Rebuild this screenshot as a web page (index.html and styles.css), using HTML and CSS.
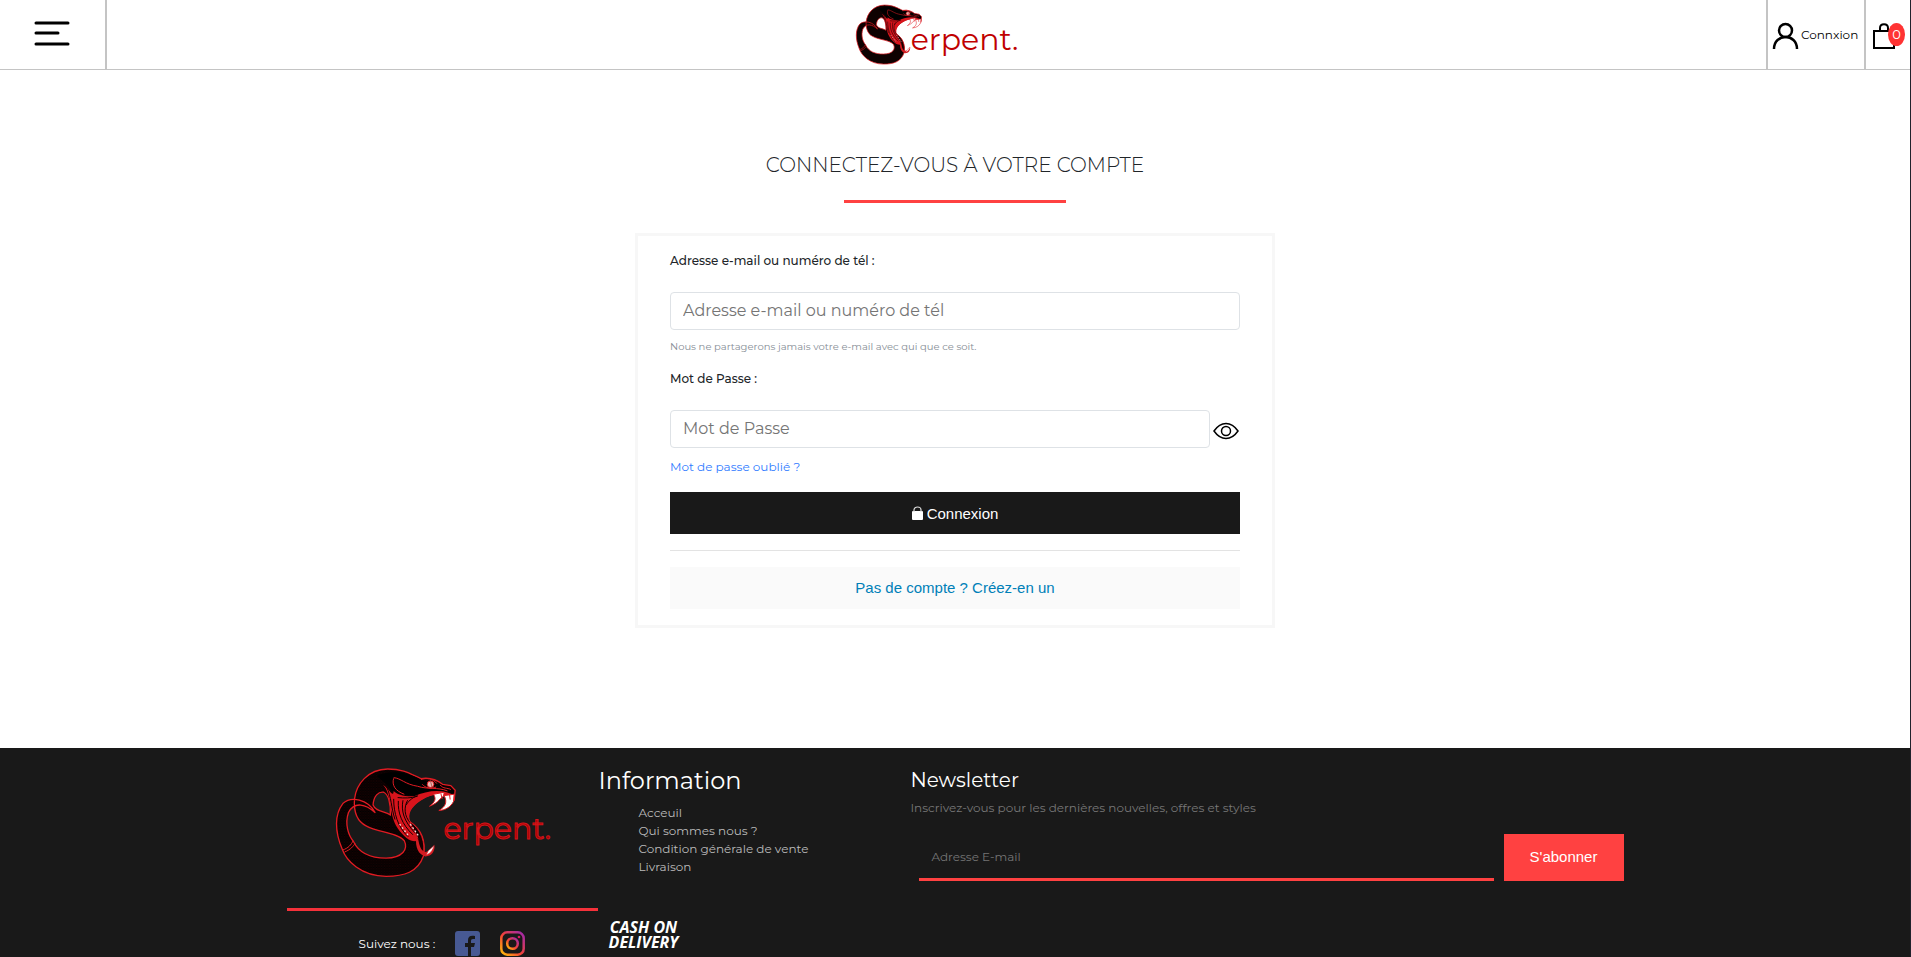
FILE: index.html
```html
<!DOCTYPE html>
<html lang="fr">
<head>
<meta charset="utf-8">
<meta name="viewport" content="width=device-width, initial-scale=1">
<title>Serpent. – Connexion</title>
<link rel="stylesheet" href="styles.css">
</head>
<body>
<svg class="sprite" aria-hidden="true">
  <defs>
    <pattern id="scales" width="8" height="8" patternUnits="userSpaceOnUse">
      <rect width="8" height="8" fill="#000"/>
      <path d="M0 4L4 0L8 4L4 8Z" fill="#000" stroke="#3a0406" stroke-width="1"/>
    </pattern>
    <linearGradient id="insta" x1="0" y1="1" x2="1" y2="0">
      <stop offset="0" stop-color="#ffc107"/><stop offset=".45" stop-color="#f44336"/><stop offset="1" stop-color="#9c27b0"/>
    </linearGradient>
    <symbol id="snake" viewBox="190 78 370 334">
      <path d="M250 175C255 130 290 85 350 84C400 84 420 100 450 113C480 108 500 118 515 130L540 134L553 148L550 178C530 155 490 150 450 176C420 195 405 220 417 243C450 265 465 300 458 345C440 395 400 407 345 407C270 407 225 360 213 325C190 270 190 220 215 188C240 165 290 175 312 215C285 190 250 180 232 215C220 250 232 285 247 302C265 340 300 352 345 352C395 352 412 325 400 300C380 275 320 275 285 255C255 240 248 205 250 175Z" fill="url(#scales)" stroke="#e01b22" stroke-width="4" stroke-linejoin="round"/>
      <path d="M306 192C308 164 322 152 338 154C352 160 360 190 358 222C340 210 315 214 306 192Z" fill="currentColor" stroke="#e01b22" stroke-width="4"/>
      <path d="M318 105C350 86 410 92 450 116L515 132L550 148L548 158C500 145 460 150 430 165C400 158 375 160 362 150C350 130 335 122 318 105Z" fill="#000"/>
      <path d="M336 132C362 156 352 220 380 262C400 292 424 306 440 300C442 282 420 262 414 238C408 214 424 192 456 174C492 154 526 156 550 178L552 166C520 142 470 148 430 166C400 168 376 160 368 150C366 172 358 146 336 132Z" fill="#d8141c"/>
      <path d="M368 174C368 215 380 260 412 288M382 180C380 215 392 250 426 282M396 178C390 210 398 240 432 276M410 178C398 200 400 226 418 246M346 136C362 170 360 200 372 236M440 164C420 172 412 182 406 192M380 170C400 172 420 172 440 166" fill="none" stroke="#120000" stroke-width="3"/>
      <path d="M368 110C390 112 402 130 440 136C470 146 500 138 530 150M368 112C362 132 372 150 400 160M450 116C466 110 486 112 498 128M454 130C462 140 480 146 496 138M508 132C516 144 530 140 540 146" fill="none" stroke="#e01b22" stroke-width="3"/>
      <path d="M417 243C450 262 466 310 456 342C446 334 440 316 440 300C444 284 422 262 417 243Z" fill="#160000" stroke="#e01b22" stroke-width="3"/>
      <path d="M436 292C432 316 442 344 464 347C482 347 492 332 491 316C484 328 474 334 462 334C450 330 446 316 442 298Z" fill="#d21c22"/>
      <path d="M466 342C476 340 486 330 490 314L472 330Z" fill="#fff" stroke="#e01b22" stroke-width="2"/>
      <circle cx="479" cy="130" r="10" fill="#eab6b0" stroke="#e01b22" stroke-width="3"/>
      <path d="M478 118L484 140" stroke="#a03030" stroke-width="2"/>
      <path d="M488 160L520 154L518 166C508 170 506 184 476 196C494 182 496 174 488 160ZM520 164L550 160L548 182C540 198 524 208 504 209C524 198 530 184 520 164Z" fill="#fff" stroke="#e01b22" stroke-width="3"/>
      <path d="M510 158L514 174M536 160L538 176" stroke="#e01b22" stroke-width="3"/>
      <path d="M386 250L412 284M418 250L442 284" fill="none" stroke="#f2dcdc" stroke-width="4" stroke-dasharray="5 7"/>
      <path d="M214 328C232 322 240 312 246 300M220 334C240 326 246 316 252 308" fill="none" stroke="#e01b22" stroke-width="3"/>
    </symbol>
  </defs>
</svg>

<header class="topbar">
  <button class="menu" type="button" aria-label="Menu">
    <svg width="36" height="26" viewBox="0 0 36 26" fill="none" stroke="#000" stroke-width="3" stroke-linecap="round"><path d="M2 2H34M2 12H24M2 23H34"/></svg>
  </button>
  <a class="brand" href="#" aria-label="Serpent.">
    <svg class="brand-snake" viewBox="190 78 370 334"><use href="#snake" x="190" y="78" width="370" height="334"/></svg>
    <span class="brand-name">erpent.</span>
  </a>
  <nav class="account" aria-label="Compte">
    <a class="user" href="#">
      <svg width="27" height="27" viewBox="0 0 27 27" fill="none" stroke="#000" stroke-width="2.500"><circle cx="13.500" cy="8.500" r="6.500"/><path d="M2 27C2 11 25 11 25 27"/></svg>
      <span>Connxion</span>
    </a>
    <a class="cart" href="#" aria-label="Panier">
      <svg width="22" height="26" viewBox="0 0 22 26" fill="none" stroke="#000" stroke-width="2"><path d="M1 8H21V25H1Z"/><path d="M7 8V5C7 0 15 0 15 5V8"/></svg>
      <span class="count">0</span>
    </a>
  </nav>
</header>

<main class="login">
  <h1>CONNECTEZ-VOUS À VOTRE COMPTE</h1>
  <form class="card">
    <label for="email">Adresse e-mail ou numéro de tél :</label>
    <input class="field" id="email" type="text" placeholder="Adresse e-mail ou numéro de tél">
    <small>Nous ne partagerons jamais votre e-mail avec qui que ce soit.</small>
    <label for="password">Mot de Passe :</label>
    <div class="password">
      <input class="field" id="password" type="password" placeholder="Mot de Passe">
      <button class="eye" type="button" aria-label="Afficher le mot de passe">
        <svg width="26" height="18" viewBox="0 0 26 18" fill="none" stroke="#000" stroke-width="1.500"><path d="M1 9C8-1 18-1 25 9C18 19 8 19 1 9Z"/><circle cx="13" cy="9" r="4.500"/></svg>
      </button>
    </div>
    <a class="forgot" href="#">Mot de passe oublié ?</a>
    <button class="submit" type="submit">
      <svg width="11" height="14" viewBox="0 0 11 14"><rect x="0" y="5" width="11" height="9" rx="1" fill="#fff"/><path d="M2 6V4C2 0 9 0 9 4V6" fill="none" stroke="#ddd" stroke-width="1.200"/></svg>
      <span>Connexion</span>
    </button>
    <hr>
    <a class="signup" href="#">Pas de compte ? Créez-en un</a>
  </form>
</main>

<footer class="footer">
  <section class="about">
    <a class="footer-brand" href="#" aria-label="Serpent.">
      <svg class="footer-snake" viewBox="190 78 370 334"><use href="#snake" x="190" y="78" width="370" height="334"/></svg>
      <span class="footer-name">erpent.</span>
    </a>
    <div class="social">
      <span>Suivez nous :</span>
      <a href="#" aria-label="Facebook"><svg width="25" height="25" viewBox="0 0 25 25"><rect width="25" height="25" rx="3" fill="#475993"/><path d="M13 25V16H10V12H13V9C13 5 16 4 20 5V8C17 8 16 8 16 10V12H20L19 16H16V25Z" fill="#191919"/></svg></a>
      <a href="#" aria-label="Instagram"><svg width="25" height="25" viewBox="0 0 25 25" fill="none" stroke="url(#insta)" stroke-width="2.500"><rect x="1.300" y="1.300" width="22.400" height="22.400" rx="6"/><circle cx="12.500" cy="12.500" r="5.300"/><circle cx="19" cy="6" r="1.300" fill="#d81b60" stroke="none"/></svg></a>
    </div>
  </section>
  <section class="info">
    <h2>Information</h2>
    <ul>
      <li><a href="#">Acceuil</a></li>
      <li><a href="#">Qui sommes nous ?</a></li>
      <li><a href="#">Condition générale de vente</a></li>
      <li><a href="#">Livraison</a></li>
    </ul>
    <p class="cod">CASH ON<br>DELIVERY</p>
  </section>
  <section class="news">
    <h2>Newsletter</h2>
    <p>Inscrivez-vous pour les dernières nouvelles, offres et styles</p>
    <form class="subscribe">
      <input type="email" aria-label="Adresse E-mail" placeholder="Adresse E-mail">
      <button type="submit">S'abonner</button>
    </form>
  </section>
</footer>
</body>
</html>
```
FILE: styles.css
```css
* { box-sizing: border-box; }

body {
  margin: 0;
  min-height: 100vh;
  display: flex;
  flex-direction: column;
  border-right: 1px solid #20212b;
  background: #fff;
  color: #212529;
  font-family: Montserrat, Inter, sans-serif;
  font-size: 12px;
}

a { text-decoration: none; color: inherit; }
button { border: 0; padding: 0; background: none; cursor: pointer; font: 15px "Liberation Sans", Arial, sans-serif; }
svg { display: block; flex: none; }
h1, h2, p, ul { margin: 0; padding: 0; font-weight: 400; }
.sprite { position: absolute; width: 0; height: 0; }

/* Top bar */
.topbar {
  display: flex;
  justify-content: space-between;
  height: 70px;
  border-bottom: 1px solid #c4c4c4;
}
.menu {
  width: 107px;
  padding: 0 0 2px 34px;
  border-right: 2px solid #c4c4c4;
}
.brand { display: flex; align-items: center; color: #fff; }
.brand-snake { width: 68px; height: 61px; }
.brand-name { margin: 10px 0 0 -12px; font-size: 30px; color: #c00000; }
.account { display: flex; justify-content: flex-end; }
.account a { display: flex; align-items: center; border-left: 2px solid #c4c4c4; color: #000; }
.user { width: 98px; gap: 2px; padding: 2px 0 0 4px; font-size: 12px; }
.user span { padding-bottom: 2px; }
.cart { position: relative; width: 46px; padding: 2px 0 0 7px; }
.count {
  position: absolute;
  left: 22px;
  top: 23px;
  width: 17px;
  height: 23px;
  border-radius: 50%;
  background: #ff3333;
  color: #fff;
  font-size: 13px;
  line-height: 23px;
  text-align: center;
}

/* Login */
.login { display: flex; flex-direction: column; align-items: center; padding: 80px 16px 120px; }
h1 { font-size: 20px; font-weight: 300; line-height: 30px; }
h1::after {
  content: "";
  display: block;
  width: 222px;
  height: 3px;
  margin: 20px auto 30px;
  background: #ff4141;
}
.card {
  display: flex;
  flex-direction: column;
  width: 100%;
  max-width: 640px;
  padding: 16px 32px;
  border: 3px solid #f7f7f7;
}
label { height: 40px; line-height: 18px; font-size: 12px; font-weight: 500; }
.field {
  width: 100%;
  height: 38px;
  padding: 0 12px 2px;
  border: 1px solid #dee2e6;
  border-radius: 4px;
  background: #fff;
  font: 16px Montserrat, Inter, sans-serif;
}
.field::placeholder { color: #757575; opacity: 1; }
small { margin: 8px 0 14px; font-size: 10px; line-height: 18px; color: #868e96; }
.password { display: flex; align-items: center; gap: 3px; }
.eye { width: 27px; padding-top: 4px; flex: none; }
.forgot { align-self: flex-start; margin: 10px 0 16px; line-height: 18px; color: #2f7bff; }
.submit {
  display: flex;
  justify-content: center;
  align-items: center;
  gap: 4px;
  height: 42px;
  background: #191919;
  color: #fff;
}
hr { width: 100%; margin: 16px 0; border: 0; border-top: 1px solid #e3e3e3; }
.signup {
  background: #fafafa;
  color: #0080b8;
  font: 15px/42px "Liberation Sans", Arial, sans-serif;
  text-align: center;
}

/* Footer */
.footer {
  flex: 1;
  display: grid;
  grid-template-columns: 7fr 7fr 16fr;
  padding: 0 15%;
  background: #191919;
  color: #fff;
}
.footer-brand {
  display: flex;
  align-items: center;
  height: 163px;
  padding: 0 0 12px 47px;
  border-bottom: 3px solid #f5313a;
  color: #191919;
}
.footer-snake { width: 124px; height: 111px; }
.footer-name { margin: 12px 0 0 -14px; font-size: 30px; color: #a00000; -webkit-text-stroke: 1px #d4141a; }
.social { display: flex; align-items: center; gap: 20px; padding: 20px 0 0 72px; }
.info { padding-top: 18px; }
.info h2 { font-size: 24px; line-height: 30px; }
.info ul { list-style: none; margin-top: 8px; padding-left: 40px; line-height: 18px; color: #bbb; }
.cod { width: 90px; margin-top: 44px; font: italic 700 16px/15px "Open Sans", "Noto Sans", sans-serif; text-align: center; }
.news { padding-top: 18px; }
.news h2 { font-size: 20px; line-height: 28px; }
.news p { margin-top: 5px; line-height: 18px; color: #777; }
.subscribe { display: flex; gap: 10px; margin: 17px 0 0 9px; }
.subscribe input {
  flex: 1;
  min-width: 0;
  padding: 0 12px;
  border: 0;
  border-bottom: 3px solid #ff4141;
  background: transparent;
  color: #fff;
  font: 12px Montserrat, Inter, sans-serif;
}
.subscribe input::placeholder { color: #757575; opacity: 1; }
.subscribe button { width: 120px; height: 47px; padding-bottom: 3px; background: #ff4141; color: #fff; }
```
